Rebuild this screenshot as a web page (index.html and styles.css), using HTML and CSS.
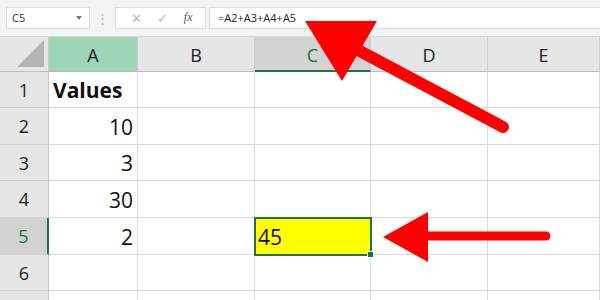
FILE: index.html
```html
<!DOCTYPE html>
<html lang="en">

<head>
    <meta charset="UTF-8">
    <title>Sum formula</title>
    <link rel="stylesheet" href="styles.css">
</head>

<body>
    <div class="window">
        <!-- Formula bar -->
        <div class="toolbar">
            <div class="name-box">
                <span>C5</span>
                <span class="caret"></span>
            </div>
            <div class="grip">⋮</div>
            <div class="fx-box">
                <span class="fx-btn">✕</span>
                <span class="fx-btn">✓</span>
                <span class="fx-btn fx">fx</span>
            </div>
            <div class="formula">=A2+A3+A4+A5</div>
        </div>

        <!-- Sheet -->
        <div class="sheet">
            <div class="corner"><span class="corner-tri"></span></div>
            <div class="col-head col-a">A</div>
            <div class="col-head">B</div>
            <div class="col-head active">C</div>
            <div class="col-head">D</div>
            <div class="col-head">E</div>

            <div class="row-head">1</div>
            <div class="cell bold">Values</div>
            <div class="cell"></div>
            <div class="cell"></div>
            <div class="cell"></div>
            <div class="cell"></div>

            <div class="row-head">2</div>
            <div class="cell num">10</div>
            <div class="cell"></div>
            <div class="cell"></div>
            <div class="cell"></div>
            <div class="cell"></div>

            <div class="row-head">3</div>
            <div class="cell num">3</div>
            <div class="cell"></div>
            <div class="cell"></div>
            <div class="cell"></div>
            <div class="cell"></div>

            <div class="row-head">4</div>
            <div class="cell num">30</div>
            <div class="cell"></div>
            <div class="cell"></div>
            <div class="cell"></div>
            <div class="cell"></div>

            <div class="row-head active">5</div>
            <div class="cell num">2</div>
            <div class="cell"></div>
            <div class="cell selected">45<span class="handle"></span></div>
            <div class="cell"></div>
            <div class="cell"></div>

            <div class="row-head">6</div>
            <div class="cell"></div>
            <div class="cell"></div>
            <div class="cell"></div>
            <div class="cell"></div>
            <div class="cell"></div>

            <div class="row-head"></div>
            <div class="cell"></div>
            <div class="cell"></div>
            <div class="cell"></div>
            <div class="cell"></div>
            <div class="cell"></div>
        </div>

        <!-- Annotation arrows -->
        <svg class="arrows" width="600" height="300" viewBox="0 0 600 300">
            <line x1="356" y1="49" x2="503" y2="127" stroke="#ff0000" stroke-width="12" stroke-linecap="round" />
            <polygon points="305,21 377,21 342,81" fill="#ff0000" />
            <line x1="420" y1="236" x2="546" y2="236" stroke="#ff0000" stroke-width="9" stroke-linecap="round" />
            <polygon points="383,237 428,212 428,262" fill="#ff0000" />
        </svg>
    </div>
</body>

</html>
```

FILE: styles.css
```css
body {
    margin: 0;
    padding: 0;
    overflow: hidden;
    background-color: #fff;
    font-family: "Open Sans", "Noto Sans", sans-serif;
}

.window {
    position: relative;
    width: 600px;
    height: 300px;
    overflow: hidden;
}

/* Formula bar */
.toolbar {
    display: flex;
    align-items: center;
    height: 37px;
    box-sizing: border-box;
    padding: 0 0 1px 6px;
    background-color: #f3f3f3;
    border-bottom: 1px solid #dadada;
}

.name-box,
.fx-box,
.formula {
    height: 22px;
    box-sizing: border-box;
    background-color: #fff;
    border: 1px solid #dcdcdc;
    font-size: 11px;
    color: #333;
}

.name-box {
    display: flex;
    align-items: center;
    justify-content: space-between;
    width: 84px;
    padding: 0 7px 0 5px;
}

.caret {
    width: 0;
    height: 0;
    border-left: 3px solid transparent;
    border-right: 3px solid transparent;
    border-top: 4px solid #777;
}

.grip {
    width: 25px;
    text-align: center;
    color: #b0b0b0;
    font-size: 13px;
}

.fx-box {
    display: flex;
    align-items: center;
    width: 91px;
    padding: 0 4px 0 8px;
}

.fx-btn {
    width: 29px;
    text-align: center;
    color: #b9b9b9;
    font-size: 13px;
}

.fx {
    font-family: "Liberation Serif", serif;
    font-style: italic;
    color: #555;
    font-size: 12px;
}

.formula {
    flex: 1;
    margin-left: 3px;
    padding: 2px 0 0 8px;
    border-right: none;
    color: #222;
}

/* Sheet */
.sheet {
    display: grid;
    grid-template-columns: 49px 89px 117px 116px 117px 112px;
    grid-template-rows: 35px 36px 37px 36px 37px 37px 36px 36px;
    font-family: "Open Sans", sans-serif;
}

.corner,
.col-head,
.row-head {
    background-color: #e6e6e6;
    color: #222;
    font-size: 18px;
    box-sizing: border-box;
    display: flex;
    align-items: center;
    justify-content: center;
}

.corner {
    position: relative;
    border-right: 1px solid #c8c8c8;
    border-bottom: 1px solid #bdbdbd;
}

.corner-tri {
    position: absolute;
    right: 4px;
    bottom: 4px;
    width: 0;
    height: 0;
    border-left: 27px solid transparent;
    border-bottom: 27px solid #b4b4b4;
}

.col-head {
    border-right: 1px solid #cfcfcf;
    border-bottom: 1px solid #bdbdbd;
    padding-top: 2px;
}

.col-head.col-a {
    background-color: #9fd5b7;
    border-right-color: #c8c8c8;
}

.col-head.active {
    background-color: #d2d2d2;
    color: #217346;
    border-bottom: 2px solid #217346;
}

.row-head {
    border-right: 1px solid #c8c8c8;
    border-bottom: 1px solid #d4d4d4;
}

.row-head.active {
    background-color: #d2d2d2;
    color: #217346;
    border-right: 2px solid #217346;
}

.cell {
    box-sizing: border-box;
    border-right: 1px solid #dadada;
    border-bottom: 1px solid #dadada;
    font-size: 21px;
    color: #111;
    display: flex;
    align-items: center;
    padding: 1px 4px 0 4px;
}

.cell.bold {
    font-weight: bold;
}

.cell.num {
    justify-content: flex-end;
}

.cell.selected {
    position: relative;
    background-color: #ffff00;
    outline: 2px solid #217346;
    outline-offset: -1px;
    padding-left: 3px;
}

.handle {
    position: absolute;
    right: -4px;
    bottom: -4px;
    width: 5px;
    height: 5px;
    background-color: #217346;
    border: 1px solid #fff;
}

.arrows {
    position: absolute;
    left: 0;
    top: 0;
}
```
